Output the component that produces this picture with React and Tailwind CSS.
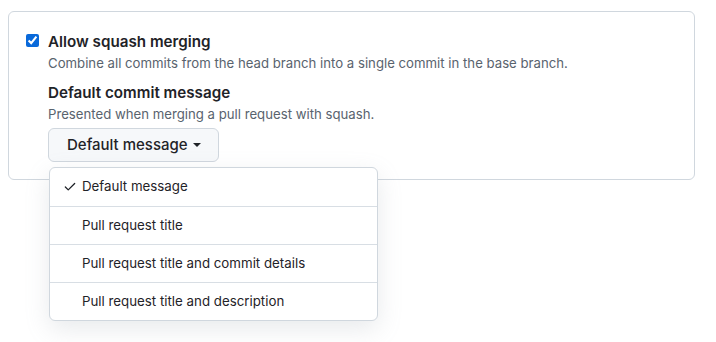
import { Check } from "lucide-react";

const options = [
  "Default message",
  "Pull request title",
  "Pull request title and commit details",
  "Pull request title and description",
];

export default function App() {
  const selected = 0;

  return (
    <div
      className="w-[716px] h-[342px] bg-white text-[#1f2328] pt-[11px] pl-2 pr-[21px]"
      style={{ fontFamily: "Inter, 'Noto Sans', sans-serif" }}
    >
      <div className="relative border border-[#d0d7de] rounded-md pl-[17px] pt-[20px] pb-[17px]">
        <div className="flex gap-[9px]">
          <input
            type="checkbox"
            defaultChecked
            className="mt-[2px] w-[13px] h-[13px] accent-[#0969da]"
          />
          <div>
            <div className="text-[15.2px] font-semibold leading-5">Allow squash merging</div>
            <div className="text-[13.2px] text-[#59636e] leading-5 mt-[1px]">
              Combine all commits from the head branch into a single commit in the base branch.
            </div>
            <div className="text-[15.2px] font-semibold leading-5 mt-[10px]">Default commit message</div>
            <div className="text-[13.2px] text-[#59636e] leading-5 mt-[1px]">
              Presented when merging a pull request with squash.
            </div>
            <button className="mt-[4px] h-[34px] pl-[18px] pr-[17px] bg-[#f6f8fa] border border-[#d0d7de] rounded-md text-[15px] font-medium flex items-center gap-[5px]">
              Default message
              <span className="w-0 h-0 border-x-4 border-x-transparent border-t-4 border-t-[#1f2328]" />
            </button>
          </div>
        </div>

        <div className="absolute left-[40px] top-[155px] w-[329px] bg-white border border-[#d0d7de] rounded-md shadow-[0_8px_24px_rgba(140,149,159,0.2)] overflow-hidden">
          {options.map((opt, i) => (
            <div
              key={opt}
              className={`h-[38px] flex items-center text-[13.3px] pl-[32px] relative ${
                i > 0 ? "border-t border-[#d8dee4]" : ""
              }`}
            >
              {i === selected && (
                <Check className="absolute left-[13px] w-[14px] h-[14px]" strokeWidth={2.2} />
              )}
              {opt}
            </div>
          ))}
        </div>
      </div>
    </div>
  );
}
